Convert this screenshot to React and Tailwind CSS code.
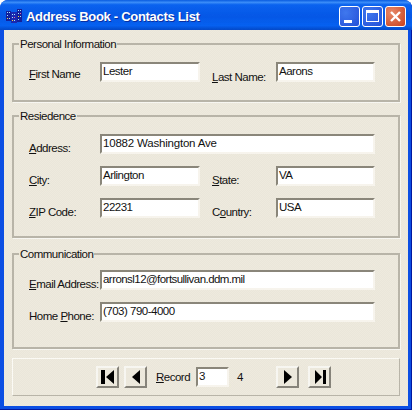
const font = { fontFamily: '"Liberation Sans", Arial, sans-serif' };
const textCls = "text-[11.5px] tracking-[-0.5px] leading-[14px] text-[#111] whitespace-nowrap";

function Label({ u, rest, pre = "", off = "translate-y-[4px]" }) {
  return (
    <label className={`block ${textCls} ${off}`}>
      {pre}<span className="underline underline-offset-1">{u}</span>{rest}
    </label>
  );
}

function Input({ value, className = "", track = "" }) {
  return (
    <div className={`h-[20px] bg-white border-t-2 border-l-2 border-t-[#8a877a] border-l-[#8a877a] border-r-2 border-b-2 border-r-[#f6f4ed] border-b-[#f6f4ed] pl-[1px] overflow-hidden ${textCls} ${className}`}>
      <span className={track}>{value}</span>
    </div>
  );
}

function Group({ title, className = "", children }) {
  return (
    <fieldset className={`mx-[8px] border-2 border-[#b8b5a8] shadow-[1px_1px_0_#f8f6f0] px-[15px] ${className}`}>
      <legend className={`ml-[-10px] px-[1px] ${textCls}`}>{title}</legend>
      {children}
    </fieldset>
  );
}

function NavButton({ children }) {
  return (
    <button className="w-[23px] h-[22px] flex items-center justify-center bg-[#ece8dc] border-t-2 border-l-2 border-t-[#f8f6f0] border-l-[#f8f6f0] border-r-2 border-b-2 border-r-[#85837a] border-b-[#85837a]">
      {children}
    </button>
  );
}

function Field({ label, value, labelW = "w-[71px]", inputW = "w-[100px]", track = "" }) {
  return (
    <div className="flex items-center">
      <div className={labelW}>{label}</div>
      <Input value={value} className={inputW} track={track} />
    </div>
  );
}

export default function App() {
  return (
    <div style={font} className="w-[412px] h-[410px] bg-white overflow-hidden">
      <div className="w-[412px] h-[410px] rounded-t-[8px] bg-[#0a4ee4] shadow-[inset_-1px_-1px_0_#0018a0] flex flex-col overflow-hidden">
        <div className="h-[30px] shrink-0 flex items-center pt-[2px] pl-[6px] pr-[6px] bg-[linear-gradient(180deg,#0a5be0_0%,#3a8cf8_8%,#0a62ee_16%,#0557e6_55%,#0661f0_85%,#0448c8_100%)]">
          <svg width="16" height="14" viewBox="0 0 16 14" className="mr-[4px]">
            <rect x="0" y="2" width="5" height="10" fill="#12209c" />
            <rect x="5" y="3" width="6" height="11" fill="#1a2ab0" />
            <rect x="11" y="0" width="5" height="13" fill="#12209c" />
            <path d="M1 3h1v1H1zM3 3h1v1H3zM1 6h1v1H1zM3 9h1v1H3zM6 5h1v1H6zM8 5h1v1H8zM6 8h1v1H6zM8 11h1v1H8zM12 1h1v1h-1zM14 1h1v1h-1zM12 4h1v1h-1zM14 7h1v1h-1zM12 10h1v1h-1z" fill="#a8e8ff" />
            <path d="M1 9h1v1H1zM6 11h1v1H6zM12 7h1v1h-1z" fill="#f2d23a" />
            <path d="M8 8h1v1H8zM14 4h1v1h-1z" fill="#e860a0" />
          </svg>
          <span className="text-white font-bold text-[13px] leading-none tracking-[-0.3px] [text-shadow:1px_1px_0_#0a2fa0]">Address Book - Contacts List</span>
          <div className="ml-auto flex gap-[2px]">
            <div className="w-[21px] h-[21px] rounded-[3px] border border-white bg-[radial-gradient(circle_at_30%_30%,#3f78ee,#2450d8)] relative">
              <div className="absolute left-[4px] bottom-[3px] w-[8px] h-[3px] bg-white" />
            </div>
            <div className="w-[21px] h-[21px] rounded-[3px] border border-white bg-[radial-gradient(circle_at_30%_30%,#3f78ee,#2450d8)] flex items-center justify-center">
              <div className="w-[13px] h-[12px] border border-white border-t-[3px]" />
            </div>
            <div className="w-[21px] h-[21px] rounded-[3px] border border-white bg-[radial-gradient(circle_at_30%_30%,#e88a6a,#c9401c)] flex items-center justify-center">
              <svg width="13" height="13" viewBox="0 0 13 13">
                <path d="M2 2l9 9M11 2l-9 9" stroke="#fff" strokeWidth="2.4" />
              </svg>
            </div>
          </div>
        </div>

        <div className="mx-[4px] h-[376px] shrink-0 bg-[repeating-conic-gradient(#ebe6da_0_25%,#efeade_0_50%)] bg-[length:2px_2px] pt-[7px]">
          <Group title="Personal Information" className="h-[65px]">
            <div className="flex pt-[11px]">
              <Field label={<Label u="F" rest="irst Name" off="translate-y-[2px]" />} value="Lester" />
              <div className="w-[12px]" />
              <Field label={<Label u="L" rest="ast Name:" off="translate-y-[5px]" />} value="Aarons" labelW="w-[64px]" inputW="w-[99px]" />
            </div>
          </Group>

          <Group title="Resiedence" className="h-[129px] mt-[7px]">
            <div className="flex flex-col gap-[12px] pt-[11px]">
              <Field label={<Label u="A" rest="ddress:" />} value="10882 Washington Ave" inputW="w-[275px]" track="tracking-[-0.2px]" />
              <div className="flex">
                <Field label={<Label u="C" rest="ity:" />} value="Arlington" />
                <div className="w-[12px]" />
                <Field label={<Label u="S" rest="tate:" />} value="VA" labelW="w-[64px]" inputW="w-[99px]" />
              </div>
              <div className="flex">
                <Field label={<Label u="Z" rest="IP Code:" />} value="22231" />
                <div className="w-[12px]" />
                <Field label={<Label pre="C" u="o" rest="untry:" />} value="USA" labelW="w-[64px]" inputW="w-[99px]" />
              </div>
            </div>
          </Group>

          <Group title="Communication" className="h-[102px] mt-[9px]">
            <div className="flex flex-col gap-[12px] pt-[9px]">
              <Field label={<Label u="E" rest="mail Address:" />} value="arronsl12@fortsullivan.ddm.mil" inputW="w-[275px]" track="tracking-[-0.55px]" />
              <Field label={<Label pre="Home " u="P" rest="hone:" />} value="(703) 790-4000" inputW="w-[275px]" />
            </div>
          </Group>

          <div className="mx-[8px] mt-[9px] h-[38px] border border-t-[#fbfaf5] border-l-[#fbfaf5] border-r-[#b8b5a8] border-b-[#b8b5a8] flex items-center pl-[83px]">
            <NavButton>
              <svg width="15" height="14" viewBox="0 0 15 14"><path d="M1 0h4v14H1zM14 0v14L6 7z" fill="#000" /></svg>
            </NavButton>
            <div className="w-[5px]" />
            <NavButton>
              <svg width="15" height="14" viewBox="0 0 15 14"><path d="M12 0v14L4 7z" fill="#000" /></svg>
            </NavButton>
            <div className="w-[9px]" />
            <div className="w-[35px]"><Label u="R" rest="ecord" off="translate-y-0" /></div>
            <div className="w-[5px]" />
            <Input value="3" className="w-[33px]" />
            <span className={`ml-[8px] w-[6px] ${textCls}`}>4</span>
            <div className="w-[33px]" />
            <NavButton>
              <svg width="15" height="14" viewBox="0 0 15 14"><path d="M4 0v14l8-7z" fill="#000" /></svg>
            </NavButton>
            <div className="w-[9px]" />
            <NavButton>
              <svg width="15" height="14" viewBox="0 0 15 14"><path d="M3 0v14l7-7zM11 0h3v14h-3z" fill="#000" /></svg>
            </NavButton>
          </div>
        </div>
      </div>
    </div>
  );
}
